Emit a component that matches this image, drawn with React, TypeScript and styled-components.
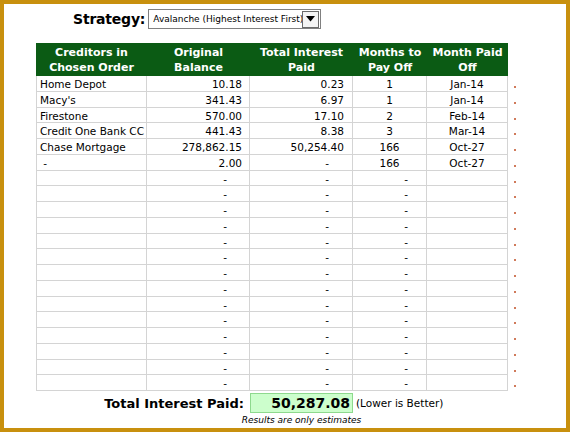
import React from 'react';
import styled, { createGlobalStyle } from 'styled-components';

const GlobalStyle = createGlobalStyle`
  body {
    margin: 0;
    background: #fff;
  }
`;

const Frame = styled.div`
  width: 570px;
  height: 432px;
  box-sizing: border-box;
  border: 4px solid #c8900e;
  background: #fff;
  padding: 5px 0 0 32px;
  font-family: 'DejaVu Sans', sans-serif;
  color: #000;
`;

const StrategyRow = styled.div`
  display: flex;
  align-items: center;
  height: 20px;
  margin-left: 37px;
  gap: 3px;
`;

const StrategyLabel = styled.span`
  font-size: 14px;
  font-weight: bold;
  letter-spacing: -0.2px;
`;

const Select = styled.div`
  width: 173px;
  height: 20px;
  box-sizing: border-box;
  border: 1px solid #808080;
  display: flex;
  align-items: center;
  padding-left: 4px;
  font-size: 9px;
  overflow: hidden;
  white-space: nowrap;
`;

const SelectText = styled.span`
  flex: 1;
  overflow: hidden;
`;

const DropButton = styled.div`
  width: 17px;
  height: 17px;
  box-sizing: border-box;
  border: 1px solid #6a6a6a;
  background: #f4f4f4;
  display: flex;
  align-items: center;
  justify-content: center;
  margin-right: 1px;
`;

const Grid = styled.div`
  display: grid;
  grid-template-columns: 111px 103px 103px 74px 81px 12px;
`;

const Sheet = styled(Grid)`
  margin-top: 14px;
  grid-auto-rows: 15.75px;
  grid-template-rows: 33px;
`;

const HeadCell = styled.div`
  background: #0b5b14;
  color: #fff;
  font-size: 11px;
  font-weight: bold;
  line-height: 15px;
  text-align: center;
  display: flex;
  align-items: center;
  justify-content: center;
`;

const Cell = styled.div<{ $align?: 'left' | 'right' | 'center'; $first?: boolean; $pad?: number }>`
  box-sizing: border-box;
  border-right: 1px solid #d4d4d4;
  border-bottom: 1px solid #d4d4d4;
  border-left: ${(p) => (p.$first ? '1px solid #d4d4d4' : 'none')};
  font-size: 10.5px;
  line-height: 14px;
  padding-top: 1px;
  text-align: ${(p) => p.$align || 'left'};
  padding-right: ${(p) => p.$pad ?? 7}px;
  padding-left: 3px;
  white-space: nowrap;
  overflow: hidden;
`;

const DotCell = styled.div`
  position: relative;
`;

const Dot = styled.span`
  position: absolute;
  left: 6px;
  top: 10px;
  width: 2px;
  height: 2px;
  background: #d07a5a;
`;

const TotalRow = styled(Grid)`
  margin-top: 2px;
  height: 20px;
  align-items: center;
`;

const TotalLabel = styled.div`
  grid-column: 1 / 3;
  text-align: right;
  padding-right: 6px;
  font-size: 13px;
  font-weight: bold;
`;

const TotalBox = styled.div`
  height: 20px;
  box-sizing: border-box;
  background: #ccfecc;
  border: 1px solid #8ed98e;
  font-size: 14px;
  font-weight: bold;
  text-align: right;
  padding-right: 2px;
  line-height: 18px;
`;

const LowerNote = styled.div`
  grid-column: 4 / 7;
  font-size: 10.5px;
  padding-left: 3px;
`;

const NoteRow = styled(Grid)`
  height: 14px;
`;

const Estimate = styled.div`
  grid-column: 3 / 4;
  display: flex;
  justify-content: center;
  font-size: 9px;
  font-style: italic;
  white-space: nowrap;
  line-height: 14px;
`;

type Row = [string, string, string, string, string];

const filled: Row[] = [
  ['Home Depot', '10.18', '0.23', '1', 'Jan-14'],
  ["Macy's", '341.43', '6.97', '1', 'Jan-14'],
  ['Firestone', '570.00', '17.10', '2', 'Feb-14'],
  ['Credit One Bank CC', '441.43', '8.38', '3', 'Mar-14'],
  ['Chase Mortgage', '278,862.15', '50,254.40', '166', 'Oct-27'],
  ['\u00a0-', '2.00', '-', '166', 'Oct-27'],
];

const emptyRow: Row = ['', '-', '-', '-', ''];
const rows: Row[] = [...filled, ...Array.from({ length: 14 }, () => emptyRow)];

const headers = [
  ['Creditors in', 'Chosen Order'],
  ['Original', 'Balance'],
  ['Total Interest', 'Paid'],
  ['Months to', 'Pay Off'],
  ['Month Paid', 'Off'],
];

export default function App() {
  return (
    <>
      <GlobalStyle />
      <Frame>
        <StrategyRow>
          <StrategyLabel>Strategy:</StrategyLabel>
          <Select>
            <SelectText>Avalanche (Highest Interest First)</SelectText>
            <DropButton>
              <svg width="9" height="6" viewBox="0 0 9 6">
                <path d="M0 0 L9 0 L4.5 5.5 Z" fill="#000" />
              </svg>
            </DropButton>
          </Select>
        </StrategyRow>

        <Sheet>
          {headers.map(([a, b]) => (
            <HeadCell key={a}>
              {a}
              <br />
              {b}
            </HeadCell>
          ))}
          <div />
          {rows.map((r, i) => {
            const isEmpty = i >= filled.length;
            return (
              <React.Fragment key={i}>
                <Cell $first $align="left" $pad={0}>{r[0]}</Cell>
                <Cell $align="right" $pad={isEmpty ? 22 : 7}>{r[1]}</Cell>
                <Cell $align="right" $pad={r[2] === '-' ? 23 : 8}>{r[2]}</Cell>
                <Cell $align={isEmpty ? 'right' : 'center'} $pad={isEmpty ? 18 : 3}>{r[3]}</Cell>
                <Cell $align="center" $pad={3}>{r[4]}</Cell>
                <DotCell>
                  <Dot />
                </DotCell>
              </React.Fragment>
            );
          })}
        </Sheet>

        <TotalRow>
          <TotalLabel>Total Interest Paid:</TotalLabel>
          <TotalBox>50,287.08</TotalBox>
          <LowerNote>(Lower is Better)</LowerNote>
        </TotalRow>
        <NoteRow>
          <Estimate>Results are only estimates</Estimate>
        </NoteRow>
      </Frame>
    </>
  );
}
